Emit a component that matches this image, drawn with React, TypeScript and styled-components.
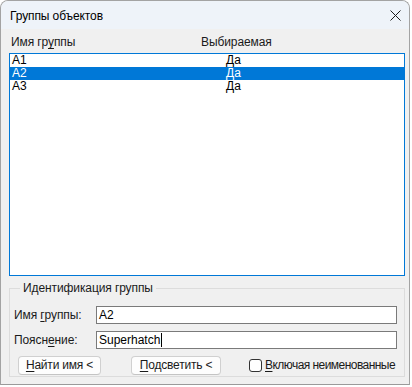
import styled, { createGlobalStyle } from "styled-components";

const GlobalStyle = createGlobalStyle`
  html, body {
    margin: 0;
    padding: 0;
    background: #ffffff;
  }
  body {
    font-family: "Segoe UI", "Liberation Sans", Arial, sans-serif;
    font-size: 12px;
    color: #000;
  }
`;

type Group = { name: string; selectable: string };

const groups: Group[] = [
  { name: "A1", selectable: "Да" },
  { name: "A2", selectable: "Да" },
  { name: "A3", selectable: "Да" },
];

export default function App() {
  const selected = "A2";

  return (
    <>
      <GlobalStyle />
      <Window>
        <TitleBar>
          <Title>Группы объектов</Title>
          <CloseButton aria-label="close">
            <svg width="11" height="11" viewBox="0 0 11 11">
              <path d="M0.5 0.5 L10.5 10.5 M10.5 0.5 L0.5 10.5" stroke="#1b1b1b" strokeWidth="1" fill="none" />
            </svg>
          </CloseButton>
        </TitleBar>

        <Body>
          {/* list header */}
          <ListHeader>
            <HeaderCell>
              Имя гр<u>у</u>ппы
            </HeaderCell>
            <HeaderCell>Выбираемая</HeaderCell>
          </ListHeader>

          <ListBox>
            {groups.map((g) => (
              <ListRow key={g.name} $selected={g.name === selected}>
                <NameCell>{g.name}</NameCell>
                <span>{g.selectable}</span>
              </ListRow>
            ))}
          </ListBox>

          {/* group identification */}
          <GroupBox>
            <Legend>Идентификация группы</Legend>
            <FormGrid>
              <FieldLabel>
                Имя <u>г</u>руппы:
              </FieldLabel>
              <TextBox>A2</TextBox>
              <FieldLabel>
                Поясн<u>е</u>ние:
              </FieldLabel>
              <TextBox>
                Superhatch
                <Caret />
              </TextBox>
            </FormGrid>

            <ButtonRow>
              <PushButton $width={83}>
                <u>Н</u>айти имя &lt;
              </PushButton>
              <PushButton $width={90}>
                <u>П</u>одсветить &lt;
              </PushButton>
              <CheckLabel>
                <CheckBox />
                <span>
                  <u>В</u>ключая неименованные
                </span>
              </CheckLabel>
            </ButtonRow>
          </GroupBox>
        </Body>
      </Window>
    </>
  );
}

/* styled components */

const Window = styled.div`
  width: 410px;
  height: 385px;
  box-sizing: border-box;
  border: 1px solid #a3a3a3;
  border-bottom-color: #9a9a9a;
  border-radius: 8px 8px 0 0;
  background: #f0f0f0;
  overflow: hidden;
  display: flex;
  flex-direction: column;
`;

const TitleBar = styled.div`
  height: 28px;
  flex: none;
  display: flex;
  align-items: center;
  justify-content: space-between;
  padding: 0 7px 0 9px;
  background: #eef3f9;
`;

const Title = styled.div`
  font-size: 12px;
  line-height: 16px;
  margin-top: 1px;
  letter-spacing: -0.1px;
`;

const CloseButton = styled.div`
  width: 11px;
  height: 11px;
  display: flex;
  margin-right: 1px;
  margin-top: 1px;

  svg {
    display: block;
  }
`;

const Body = styled.div`
  flex: 1;
  padding: 0 4px 0 8px;
  display: flex;
  flex-direction: column;
`;

const ListHeader = styled.div`
  height: 24px;
  display: grid;
  grid-template-columns: 190px 1fr;
  align-items: end;
  padding: 0 0 3px 2px;
  box-sizing: border-box;
`;

const HeaderCell = styled.div`
  line-height: 15px;
  letter-spacing: -0.1px;
  color: #1a1a1a;

  u {
    text-underline-offset: 2px;
  }
`;

const ListBox = styled.div`
  height: 223px;
  flex: none;
  box-sizing: border-box;
  border: 1px solid #0078d7;
  background: #ffffff;
`;

const ListRow = styled.div<{ $selected?: boolean }>`
  height: 13px;
  line-height: 13px;
  display: flex;
  padding-left: 2px;
  background: ${(p) => (p.$selected ? "#0078d7" : "transparent")};
  color: ${(p) => (p.$selected ? "#ffffff" : "#000000")};
`;

const NameCell = styled.span`
  width: 214px;
  flex: none;
`;

const GroupBox = styled.fieldset`
  margin: 5px 0 0 0;
  padding: 10px 7px 1px 4px;
  min-width: 0;
  width: 396px;
  box-sizing: border-box;
  border: 1px solid #dcdcdc;
`;

const Legend = styled.legend`
  margin-left: 6px;
  padding: 0 3px;
  line-height: 15px;
  font-size: 12px;
  letter-spacing: -0.1px;
  color: #1a1a1a;
`;

const FormGrid = styled.div`
  display: grid;
  grid-template-columns: 82px 1fr;
  row-gap: 7px;
  align-items: center;
`;

const FieldLabel = styled.div`
  line-height: 15px;
  letter-spacing: -0.1px;
  color: #1a1a1a;

  u {
    text-underline-offset: 2px;
  }
`;

const TextBox = styled.div`
  height: 18px;
  box-sizing: border-box;
  border: 1px solid #7a7a7a;
  background: #ffffff;
  padding: 0 2px;
  line-height: 16px;
  display: flex;
  align-items: center;
`;

const Caret = styled.span`
  display: inline-block;
  width: 1px;
  height: 14px;
  background: #000;
  margin-left: 1px;
`;

const ButtonRow = styled.div`
  display: flex;
  align-items: center;
  margin-top: 7px;
  padding-left: 4px;
  white-space: nowrap;
`;

const PushButton = styled.button<{ $width: number }>`
  width: ${(p) => p.$width}px;
  height: 19px;
  flex: none;
  box-sizing: border-box;
  margin-right: 30px;
  padding: 0;
  font-family: inherit;
  font-size: 12px;
  font-weight: 400;
  letter-spacing: -0.2px;
  line-height: 15px;
  color: #1a1a1a;
  background: #fdfdfd;
  border: 1px solid #d0d0d0;
  border-bottom-color: #c4c4c4;
  border-radius: 4px;

  u {
    text-underline-offset: 2px;
  }
`;

const CheckLabel = styled.label`
  display: flex;
  align-items: center;
  flex: none;
  gap: 3px;
  margin-left: -2px;
  line-height: 15px;
  letter-spacing: -0.55px;
  color: #1a1a1a;

  u {
    text-underline-offset: 2px;
  }
`;

const CheckBox = styled.span`
  width: 13px;
  height: 13px;
  flex: none;
  box-sizing: border-box;
  border: 1px solid #333333;
  border-radius: 3px;
  background: #ffffff;
`;
